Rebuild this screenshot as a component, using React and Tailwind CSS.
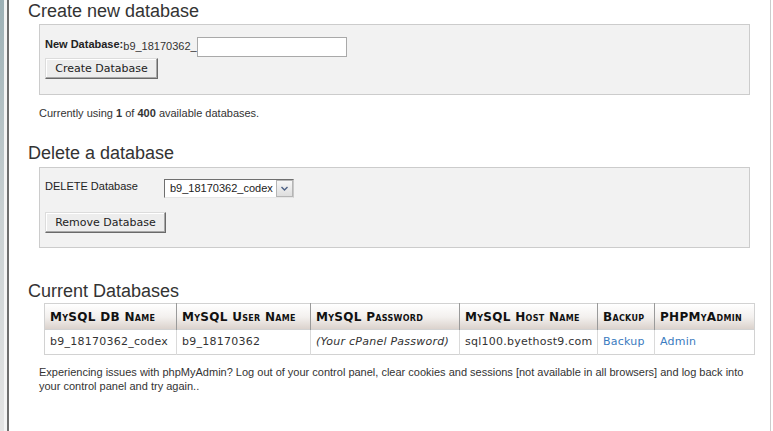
import React from 'react';

const sans = "font-['Liberation_Sans',Arial,sans-serif]";
const verd = "font-['DejaVu_Sans',Verdana,sans-serif]";

const Button = ({ label, w }) => (
  <button
    type="button"
    className={`${verd} ${w} h-[21px] text-[11px] text-[#222] leading-none bg-[#ededed] border border-t-[#dcdcdc] border-l-[#dcdcdc] border-r-[#6a6a6a] border-b-[#6a6a6a] shadow-[inset_-1px_-1px_0_#a8a8a8,inset_1px_1px_0_#fff] flex items-center justify-center`}
  >
    {label}
  </button>
);

const Heading = ({ children, className }) => (
  <h2 className={`${sans} text-[18px] leading-[20px] text-[#333] pl-[19px] ${className}`}>{children}</h2>
);

const cols = [
  { name: 'MySQL DB Name', w: 'w-[132px]' },
  { name: 'MySQL User Name', w: 'w-[134px]' },
  { name: 'MySQL Password', w: 'w-[149px]' },
  { name: 'MySQL Host Name', w: 'w-[138px]' },
  { name: 'Backup', w: 'w-[57px]' },
  { name: 'PHPMyAdmin', w: 'w-[100px]' },
];

export default function App() {
  return (
    <div className="w-[773px] h-[431px] flex bg-white overflow-hidden text-[#333]">
      {/* left frame edge */}
      <div className="w-[4px] h-full bg-gradient-to-b from-[#9cb0b5] via-[#c9d0d2] to-[#e4e4e4]" />
      <div className="w-[3px] h-full bg-[#f4f4f4]" />
      <div className="w-[2px] h-full bg-[#6e6e6e]" />

      <div className="flex-1 h-full border-r border-[#cccccc]">
        <Heading className="mt-[1px]">Create new database</Heading>

        <div className="ml-[30px] mt-[3px] w-[711px] bg-[#f2f2f2] border border-[#cccccc] pl-[5px] pt-[12px] pb-[15px]">
          <div className="flex items-start h-[20px]">
            <span className={`${sans} text-[11px] leading-[13px] font-bold text-[#222] mt-[1px]`}>New Database:</span>
            <span className={`${sans} text-[11px] leading-[13px] text-[#333] mt-[3px]`}>b9_18170362_</span>
            <input className="w-[150px] h-[20px] bg-white border border-[#a9a9a9] outline-none" />
          </div>
          <div className="mt-[1px]">
            <Button label="Create Database" w="w-[113px]" />
          </div>
        </div>

        <p className={`${sans} ml-[30px] mt-[12px] text-[11px] leading-[13px] text-[#333]`}>
          Currently using <b>1</b> of <b>400</b> available databases.
        </p>

        <Heading className="mt-[23px]">Delete a database</Heading>

        <div className="ml-[30px] mt-[4px] w-[711px] bg-[#f2f2f2] border border-[#cccccc] pl-[5px] pt-[11px] pb-[14px]">
          <div className="flex items-start">
            <span className={`${sans} w-[119px] text-[11px] leading-[13px] text-[#222] mt-[1px]`}>DELETE Database</span>
            <div className="w-[130px] h-[19px] flex bg-white border border-t-[#6f6f6f] border-l-[#6f6f6f] border-r-[#c8c8c8] border-b-[#e6e6e6]">
              <span className={`${sans} flex-1 text-[11px] leading-[17px] text-[#222] pl-[5px]`}>b9_18170362_codex</span>
              <span className="w-[17px] h-[17px] bg-gradient-to-b from-[#f7f7f7] to-[#dedede] border border-[#b5b5b5] flex items-center justify-center">
                <svg width="7" height="5" viewBox="0 0 7 5">
                  <path d="M0.5 1 L3.5 4 L6.5 1" fill="none" stroke="#4d6185" strokeWidth="1.4" />
                </svg>
              </span>
            </div>
          </div>
          <div className="mt-[14px]">
            <Button label="Remove Database" w="w-[121px]" />
          </div>
        </div>

        <Heading className="mt-[33px]">Current Databases</Heading>

        <table className={`${verd} ml-[35px] mt-[2px] w-[710px] table-fixed border-collapse border border-[#d2d2d2] text-[11px] tracking-[0.25px]`}>
          <thead>
            <tr className="h-[26px] bg-gradient-to-b from-white via-[#f3f0ee] to-[#d9d0ca]">
              {cols.map((c, i) => (
                <th
                  key={c.name}
                  className={`${c.w} text-left font-bold text-[12px] tracking-[0.3px] text-[#111] whitespace-nowrap overflow-hidden px-[5px] [font-variant-caps:small-caps] ${i > 0 ? 'border-l border-[#9a9a9a]' : ''}`}
                >
                  {c.name}
                </th>
              ))}
            </tr>
          </thead>
          <tbody>
            <tr className="h-[25px] bg-white border-t border-[#d2d2d2]">
              <td className="px-[5px] text-[#333]">b9_18170362_codex</td>
              <td className="px-[5px] text-[#333] border-l border-[#dadada]">b9_18170362</td>
              <td className="px-[5px] text-[#333] italic border-l border-[#dadada] whitespace-nowrap">(Your cPanel Password)</td>
              <td className="px-[5px] text-[#333] border-l border-[#dadada]">sql100.byethost9.com</td>
              <td className="px-[5px] text-[#3a7bc0] border-l border-[#dadada]">Backup</td>
              <td className="px-[5px] text-[#3a7bc0] border-l border-[#dadada]">Admin</td>
            </tr>
          </tbody>
        </table>

        <p className={`${sans} ml-[30px] mt-[10px] w-[711px] text-[11px] leading-[14px] text-[#333]`}>
          Experiencing issues with phpMyAdmin? Log out of your control panel, clear cookies and sessions [not available in all browsers] and log back into your control panel and try again..
        </p>
      </div>
      <div className="w-[2px] h-full bg-white" />
    </div>
  );
}
